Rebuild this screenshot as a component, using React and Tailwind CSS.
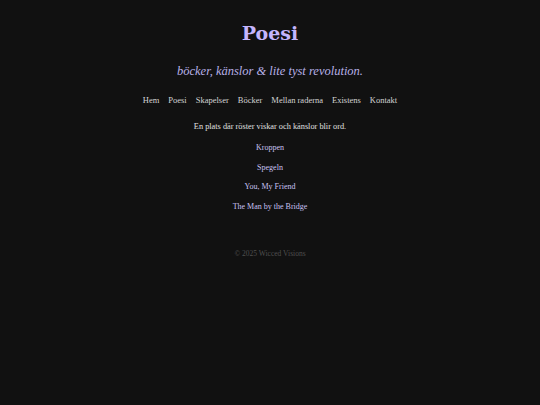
const links = ["Hem", "Poesi", "Skapelser", "Böcker", "Mellan raderna", "Existens", "Kontakt"];
const poems = ["Kroppen", "Spegeln", "You, My Friend", "The Man by the Bridge"];

export default function App() {
  return (
    <div className="min-h-[405px] w-full bg-[#111111] text-[#dddddd] text-center font-['Liberation_Serif',serif]">
      <header className="pt-[20px]">
        <h1 className="text-[19px] leading-[26px] font-bold text-[#c4b5fd] tracking-[0px] font-['DejaVu_Serif',serif]">
          Poesi
        </h1>
        <p className="mt-[15px] text-[12.5px] leading-[20px] italic text-[#b7b0e6]">
          böcker, känslor &amp; lite tyst revolution.
        </p>
        <nav className="mt-[12px] flex justify-center gap-[9px] text-[8.5px] leading-[14px] text-[#d4d4d4]">
          {links.map((l) => (
            <a key={l} href="#">{l}</a>
          ))}
        </nav>
      </header>

      <main className="mt-[13px]">
        <p className="text-[8.3px] leading-[14px] text-[#e0e0e0]">
          En plats där röster viskar och känslor blir ord.
        </p>
        <ul className="mt-[7px] flex flex-col gap-[5.7px] text-[8px] leading-[14px]">
          {poems.map((p) => (
            <li key={p}>
              <a href="#" className="text-[#c8c2f2]">{p}</a>
            </li>
          ))}
        </ul>
      </main>

      <footer className="mt-[34px] text-[7.5px] leading-[12px] text-[#4f4f4f]">
        © 2025 Wicced Visions
      </footer>
    </div>
  );
}
